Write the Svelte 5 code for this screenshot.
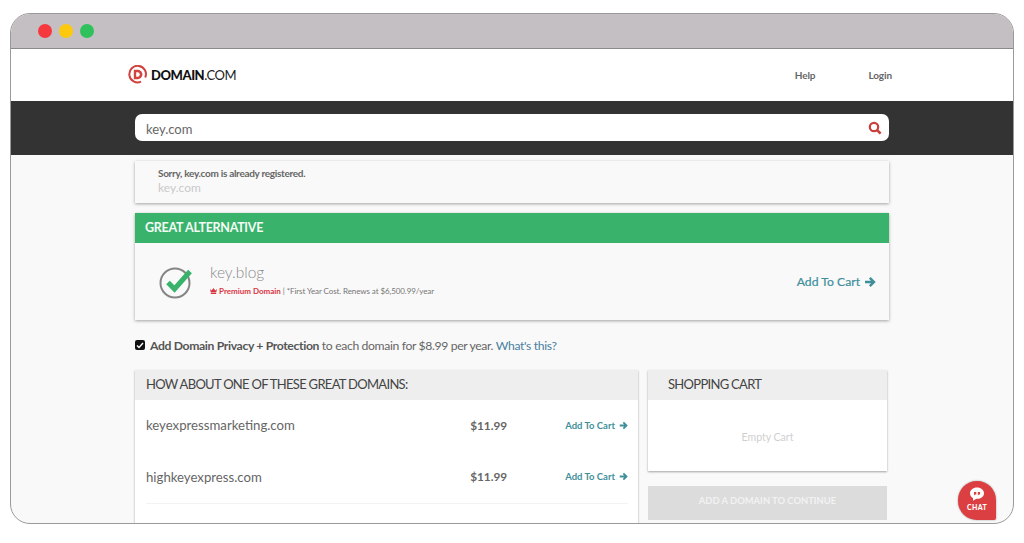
<script>
    const suggestions = [
        { name: 'keyexpressmarketing.com', price: '$11.99' },
        { name: 'highkeyexpress.com', price: '$11.99' },
        { name: 'keyexpresspro.com', price: '$11.99' }
    ];
</script>

{#snippet arrow(size)}
    <svg class="arrow" width={size} height={size} viewBox="0 0 12 12" aria-hidden="true">
        <path d="M1 6h8.2M5.8 1.800 10 6l-4.200 4.200" fill="none" stroke="currentColor" stroke-width="2.4" />
    </svg>
{/snippet}

<div class="window">
    <div class="titlebar">
        <span class="dot red"></span>
        <span class="dot yellow"></span>
        <span class="dot green"></span>
    </div>

    <header class="topnav">
        <div class="brand">
            <svg width="19" height="19" viewBox="0 0 19 19" aria-hidden="true">
                <path d="M13 16.700A8.300 8.300 0 1 1 17.200 12.500" fill="none" stroke="#d0433f" stroke-width="2" />
                <path d="M5.800 4.800h3.900a4.700 4.700 0 0 1 0 9.400H5.800z" fill="#d0433f" />
                <path d="M8.200 7.200h1.300a2.300 2.300 0 0 1 0 4.600H8.200z" fill="#fff" />
            </svg>
            <span class="brandname"><b>DOMAIN</b>.COM</span>
        </div>
        <nav class="links">
            <span>Help</span>
            <span>Login</span>
        </nav>
    </header>

    <div class="searchbar">
        <div class="searchbox">
            <span class="query">key.com</span>
            <svg width="14" height="14" viewBox="0 0 14 14" aria-hidden="true">
                <circle cx="6" cy="6" r="4.200" fill="none" stroke="#c9403f" stroke-width="2.200" />
                <path d="M9 9l3.600 3.600" stroke="#c9403f" stroke-width="2.600" />
            </svg>
        </div>
    </div>

    <main class="content">
        <section class="card taken">
            <p class="sorry">Sorry, key.com is already registered.</p>
            <p class="taken-name">key.com</p>
        </section>

        <section class="card alt">
            <h2>GREAT ALTERNATIVE</h2>
            <div class="alt-body">
                <svg class="check" width="36" height="34" viewBox="0 0 36 34" aria-hidden="true">
                    <circle cx="17" cy="18" r="14.500" fill="none" stroke="#858585" stroke-width="2" />
                    <path d="M10 17.500l6.500 6.500L32 6.500" fill="none" stroke="#39b36b" stroke-width="5" />
                </svg>
                <div class="alt-info">
                    <div class="alt-name">key.blog</div>
                    <div class="alt-note">
                        <svg width="7" height="6" viewBox="0 0 7 6" aria-hidden="true">
                            <path d="M0 1l1.700 1.500L3.500 0l1.800 2.500L7 1 6.200 4.600H.8zM.8 5h5.400v1H.8z" fill="#d9343f" />
                        </svg>
                        <span class="premium">Premium Domain</span>
                        <span class="fine">| *First Year Cost. Renews at $6,500.99/year</span>
                    </div>
                </div>
                <a class="cart-link big" href="#top">Add To Cart {@render arrow(12)}</a>
            </div>
        </section>

        <div class="privacy">
            <span class="checkbox">
                <svg width="8" height="7" viewBox="0 0 8 7" aria-hidden="true">
                    <path d="M1 3.500l2 2L7 1" fill="none" stroke="#fff" stroke-width="1.400" />
                </svg>
            </span>
            <span><b>Add Domain Privacy + Protection</b> to each domain for $8.99 per year. <a href="#top">What's this?</a></span>
        </div>

        <div class="columns">
            <section class="panel list">
                <h3>HOW ABOUT ONE OF THESE GREAT DOMAINS:</h3>
                {#each suggestions as s}
                    <div class="row">
                        <span class="domain">{s.name}</span>
                        <span class="price">{s.price}</span>
                        <a class="cart-link" href="#top">Add To Cart {@render arrow(9)}</a>
                    </div>
                {/each}
            </section>

            <aside class="side">
                <section class="panel cart">
                    <h3>SHOPPING CART</h3>
                    <div class="empty">Empty Cart</div>
                </section>
                <div class="continue">ADD A DOMAIN TO CONTINUE</div>
            </aside>
        </div>
    </main>

    <div class="chat">
        <svg width="16" height="14" viewBox="0 0 16 14" aria-hidden="true">
            <path d="M8 .5c4 0 7 2.500 7 5.700s-3 5.600-7 5.600h-.6L4 13.800v-2.800C2 10 1 8.200 1 6.200 1 3 4 .5 8 .5z" fill="#fff" />
            <path d="M5 5h2.300v2.400H6L5 8.500zM8.800 5h2.300v2.400H9.800l-1 1.100z" fill="#d9403f" />
        </svg>
        <span>CHAT</span>
    </div>
</div>

<style>
    :global(body) {
        background: #fff;
    }

    .window {
        position: relative;
        box-sizing: border-box;
        width: 1004px;
        height: 511px;
        margin: 13px 10px 19px;
        border: 1px solid #9a9a9a;
        border-radius: 20px;
        background: #f9f9f9;
        overflow: hidden;
        font-family: Lato, "Liberation Sans", sans-serif;
        color: #555;
    }

    .titlebar {
        display: flex;
        align-items: center;
        gap: 7px;
        box-sizing: border-box;
        height: 35px;
        padding: 0 0 1px 27px;
        background: #c4bfc2;
        border-bottom: 1px solid #8a8a8a;
    }

    .dot {
        width: 14px;
        height: 14px;
        border-radius: 50%;
    }
    .red { background: #f6393f; }
    .yellow { background: #fdc90f; }
    .green { background: #2fc25c; }

    .topnav {
        display: flex;
        align-items: center;
        justify-content: space-between;
        box-sizing: border-box;
        height: 52px;
        padding: 0 121px 1px 117px;
        background: #fff;
    }

    .brand {
        display: flex;
        align-items: center;
        gap: 4px;
    }

    .brandname {
        font-size: 13px;
        color: #222;
        letter-spacing: -0.45px;
    }
    .brandname b {
        font-weight: 900;
        color: #111;
    }

    .links {
        display: flex;
        gap: 53px;
        font-size: 10px;
        font-weight: 700;
        letter-spacing: -0.1px;
        color: #666;
    }

    .searchbar {
        box-sizing: border-box;
        height: 54px;
        padding: 13px 0 0 124px;
        background: #333;
    }

    .searchbox {
        display: flex;
        align-items: center;
        justify-content: space-between;
        box-sizing: border-box;
        width: 754px;
        height: 27px;
        padding: 0 7px 0 11px;
        border-radius: 7px;
        background: #fff;
        font-size: 13px;
        color: #666;
    }
    .query {
        padding-top: 3px;
    }

    .content {
        width: 754px;
        margin-left: 124px;
        padding-top: 6px;
    }

    .card {
        background: #f9f9f9;
        box-shadow: 0 1px 3px rgba(0, 0, 0, 0.35);
    }

    .taken {
        box-sizing: border-box;
        height: 42px;
        padding: 6px 23px 0;
    }
    .taken p {
        margin: 0;
    }
    .sorry {
        font-size: 10px;
        font-weight: 700;
        line-height: 12px;
        letter-spacing: -0.3px;
        color: #666;
    }
    .taken-name {
        margin-top: 2px !important;
        font-size: 12px;
        line-height: 14px;
        color: #c9c9c9;
    }

    .alt {
        margin-top: 10px;
    }
    .alt h2 {
        box-sizing: border-box;
        height: 30px;
        margin: 0;
        padding-left: 10px;
        background: #39b36b;
        color: #f4fbf6;
        font-size: 12.5px;
        font-weight: 700;
        line-height: 30px;
        letter-spacing: -0.3px;
    }

    .alt-body {
        display: flex;
        align-items: center;
        box-sizing: border-box;
        height: 77px;
        padding: 0 13px 0 23px;
    }

    .alt-info {
        flex: 1;
        margin: -5px 0 0 16px;
    }
    .alt-name {
        font-size: 15.5px;
        line-height: 20px;
        font-weight: 300;
        color: #8a8a8a;
    }
    .alt-note {
        display: flex;
        align-items: center;
        gap: 2px;
        margin-top: 3px;
        font-size: 8px;
        line-height: 12px;
        color: #777;
    }
    .premium {
        color: #d9343f;
        font-weight: 700;
    }
    .fine {
        letter-spacing: -0.09px;
    }

    .cart-link {
        display: flex;
        align-items: center;
        gap: 4px;
        color: #3f8f9b;
        text-decoration: none;
        font-size: 9.5px;
        font-weight: 700;
    }
    .cart-link.big {
        font-size: 12.2px;
        font-weight: 400;
        -webkit-text-stroke: 0.2px #3f8f9b;
    }

    .privacy {
        display: flex;
        align-items: center;
        gap: 5px;
        margin-top: 16px;
        height: 18px;
        font-size: 12.2px;
        letter-spacing: -0.36px;
        color: #666;
    }
    .privacy b {
        color: #555;
        font-weight: 700;
    }
    .privacy a {
        color: #4a7fa0;
        text-decoration: none;
    }
    .checkbox {
        display: flex;
        align-items: center;
        justify-content: center;
        width: 10px;
        height: 10px;
        border-radius: 2px;
        background: #111;
    }

    .columns {
        display: flex;
        align-items: flex-start;
        gap: 10px;
        margin-top: 16px;
    }

    .panel {
        background: #fff;
        box-shadow: 0 1px 2px rgba(0, 0, 0, 0.35);
    }
    .panel h3 {
        box-sizing: border-box;
        height: 30px;
        margin: 0;
        background: #eeeeee;
        font-size: 13px;
        font-weight: 400;
        line-height: 28px;
        letter-spacing: -0.7px;
        color: #444;
    }

    .list {
        width: 503px;
        flex: none;
    }
    .list h3 {
        padding-left: 11px;
    }

    .row {
        display: flex;
        align-items: center;
        box-sizing: border-box;
        height: 52px;
        margin: 0 10px 0 11px;
        padding-bottom: 2px;
        border-bottom: 1px solid #f3f3f3;
    }
    .row:first-of-type {
        border-bottom: 0;
    }
    .domain {
        flex: 1;
        font-size: 13.2px;
        color: #666;
    }
    .price {
        width: 95px;
        font-size: 11.8px;
        font-weight: 700;
        color: #666;
    }

    .side {
        width: 239px;
        flex: none;
    }
    .cart h3 {
        padding-left: 20px;
    }
    .empty {
        height: 71px;
        text-align: center;
        font-size: 10.5px;
        font-weight: 400;
        line-height: 75px;
        color: #cfcfcf;
    }

    .continue {
        height: 34px;
        margin-top: 15px;
        background: #dcdcdc;
        color: #f2f2f2;
        text-align: center;
        font-size: 9.4px;
        font-weight: 700;
        line-height: 29px;
    }

    .chat {
        position: absolute;
        right: 17px;
        bottom: 3px;
        display: flex;
        flex-direction: column;
        align-items: center;
        box-sizing: border-box;
        width: 38px;
        height: 39px;
        padding-top: 6px;
        border-radius: 19px 19px 2px 19px;
        background: #dc3f42;
        box-shadow: 0 0 2px rgba(0, 0, 0, 0.4);
        color: #fff;
        font-size: 7px;
        font-weight: 900;
        letter-spacing: 0.3px;
    }
    .chat span {
        margin-top: 2px;
    }
</style>
